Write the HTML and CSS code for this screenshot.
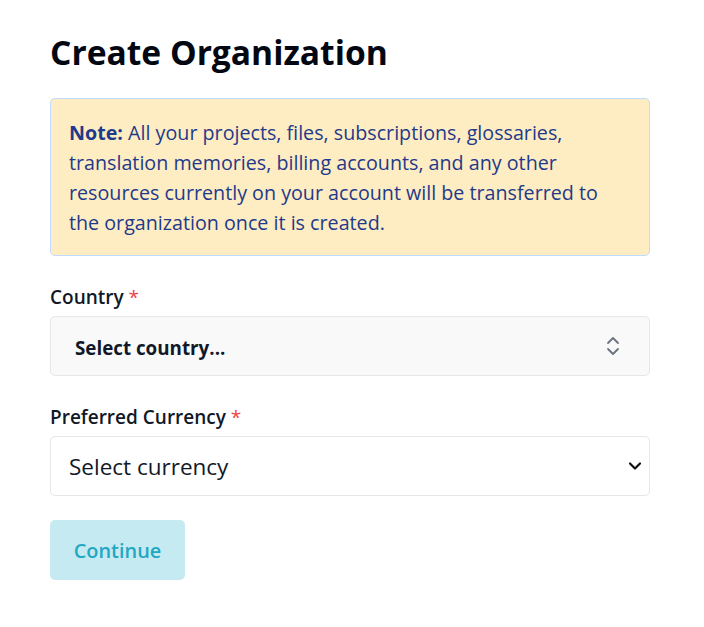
FILE: index.html
```html
<!DOCTYPE html>
<html lang="en">
<head>
<meta charset="utf-8">
<title>Create Organization</title>
<link rel="stylesheet" href="styles.css">
</head>
<body>
<main class="page">
  <h1 class="title">Create Organization</h1>
  <div class="note">
    <p><strong>Note:</strong> All your projects, files, subscriptions, glossaries,<br>translation memories, billing accounts, and any other<br>resources currently on your account will be transferred to<br>the organization once it is created.</p>
  </div>
  <div class="field">
    <label class="label">Country <span class="req">*</span></label>
    <div class="combo">
      <span class="combo-text">Select country...</span>
      <svg class="updown" width="16" height="22" viewBox="0 0 16 22" fill="none" stroke="#6b7280" stroke-width="1.8" stroke-linecap="round" stroke-linejoin="round"><path d="M3 8l5-5 5 5"/><path d="M3 14l5 5 5-5"/></svg>
    </div>
  </div>
  <div class="field">
    <label class="label">Preferred Currency <span class="req">*</span></label>
    <div class="select">
      <span class="select-text">Select currency</span>
      <svg class="down" width="14" height="10" viewBox="0 0 14 10" fill="none" stroke="#111" stroke-width="2.2" stroke-linecap="round" stroke-linejoin="round"><path d="M2 2.5l5 5 5-5"/></svg>
    </div>
  </div>
  <button class="btn" type="button">Continue</button>
</main>
</body>
</html>
```
FILE: styles.css
```css
html, body {
  margin: 0;
  padding: 0;
  background: #ffffff;
}
body {
  font-family: "Open Sans", "Noto Sans", sans-serif;
  color: #111827;
}
.page {
  width: 600px;
  padding: 30px 0 0 50px;
  display: flex;
  flex-direction: column;
  align-items: flex-start;
}
.title {
  margin: 0;
  font-size: 33.6px;
  line-height: 44px;
  font-weight: 700;
  color: #030712;
}
.note {
  box-sizing: border-box;
  width: 600px;
  margin-top: 24px;
  background: #feecc2;
  border: 1px solid #bfdbfe;
  border-radius: 5px;
  padding: 19px 18px 17px;
}
.note p {
  margin: 0;
  font-size: 19.7px;
  line-height: 30px;
  color: #1e3a8a;
}
.note strong {
  font-weight: 700;
}
.field {
  width: 600px;
  margin-top: 28px;
  display: flex;
  flex-direction: column;
  gap: 6px;
}
.field + .field {
  margin-top: 28px;
}
.label {
  font-size: 19px;
  line-height: 26px;
  font-weight: 600;
  color: #111827;
}
.req {
  color: #ef4444;
  font-weight: 400;
}
.combo, .select {
  box-sizing: border-box;
  height: 60px;
  border: 1px solid #e5e7eb;
  border-radius: 5px;
  display: flex;
  align-items: center;
  justify-content: space-between;
}
.combo {
  background: #f9f9fa;
  padding: 0 28px 0 24px;
}
.combo-text {
  font-size: 18.8px;
  font-weight: 700;
  color: #111827;
  padding-top: 3px;
}
.select {
  background: #ffffff;
  padding: 0 7px 0 18px;
}
.select-text {
  font-size: 22.5px;
  color: #111827;
}
.btn {
  margin-top: 24px;
  height: 60px;
  width: 135px;
  border: none;
  border-radius: 5px;
  background: #c5eaf1;
  color: #22a7c4;
  font-family: "Open Sans", "Noto Sans", sans-serif;
  font-size: 19.9px;
  font-weight: 600;
  padding: 0;
}
```
